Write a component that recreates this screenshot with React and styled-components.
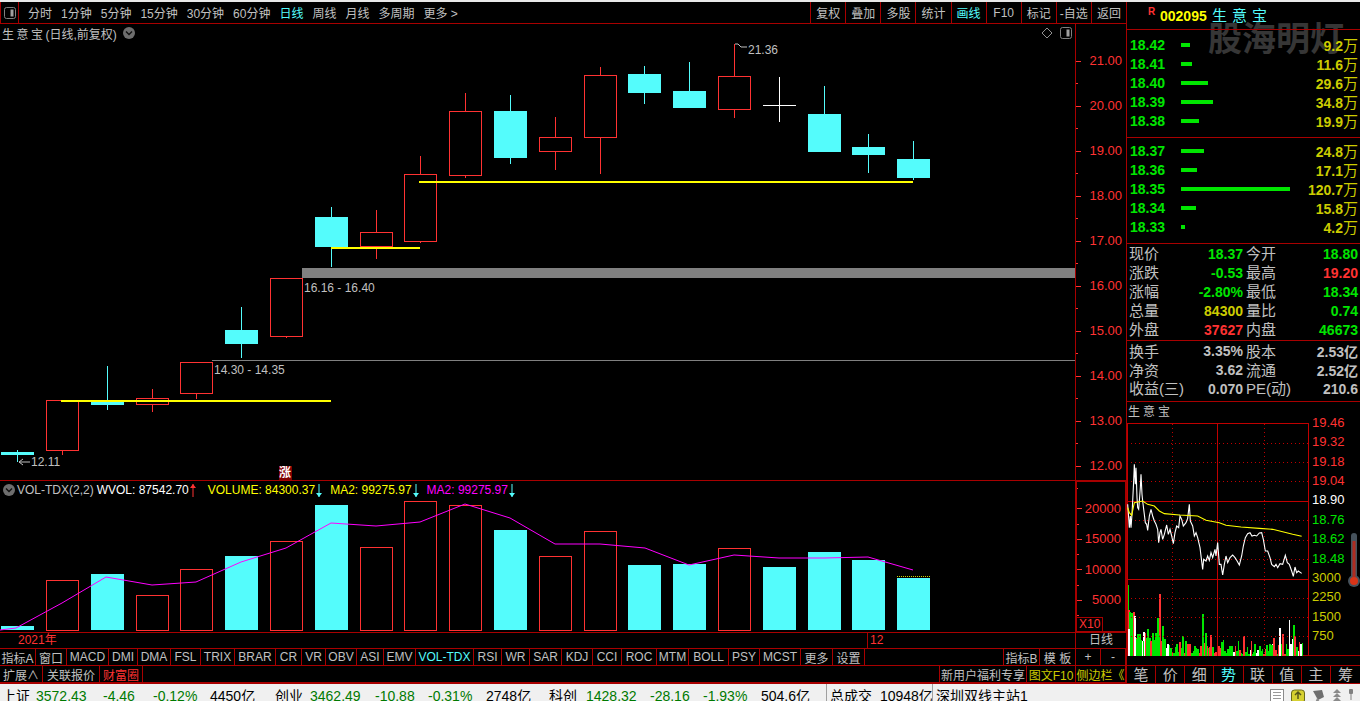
import React from 'react';
import styled, { createGlobalStyle } from 'styled-components';

const RED = '#ff3232';
const LINE = '#a80000';
const CYAN = '#54fcfc';
const GREEN = '#00e600';
const GREY = '#c0c0c0';
const YELLOW = '#cccc00';

const TOOL_LEFT = ['分时', '1分钟', '5分钟', '15分钟', '30分钟', '60分钟', '日线', '周线', '月线', '多周期', '更多 >'];
const TOOL_RIGHT = ['复权', '叠加', '多股', '统计', '画线', 'F10', '标记', '-自选', '返回'];

// [center, high, bodyTop, bodyBottom, low, up]
const CANDLES = [
  [17, 450, 452, 455, 462, false],
  [62, 400, 400, 450, 455, true],
  [107, 366, 401, 405, 410, false],
  [152, 389, 398, 404, 412, true],
  [196, 362, 362, 393, 399, true],
  [241, 307, 330, 344, 358, false],
  [286, 278, 278, 336, 338, true],
  [331, 207, 217, 247, 267, false],
  [376, 210, 232, 246, 259, true],
  [420, 156, 174, 241, 243, true],
  [465, 93, 111, 175, 178, true],
  [510, 95, 111, 158, 164, false],
  [555, 117, 137, 151, 170, true],
  [600, 67, 75, 137, 174, true],
  [644, 66, 74, 93, 104, false],
  [689, 62, 91, 108, 108, false],
  [734, 44, 76, 109, 118, true],
  [824, 86, 114, 152, 152, false],
  [868, 134, 147, 155, 173, false],
  [913, 141, 159, 178, 180, false],
];

// [left, top, up]
const VOLUMES = [
  [1, 626, false], [46, 580, true], [91, 574, false], [136, 595, true], [180, 569, true],
  [225, 556, false], [270, 541, true], [315, 505, false], [360, 547, true], [404, 501, true],
  [449, 505, true], [494, 530, false], [539, 556, true], [584, 531, true], [628, 565, false],
  [673, 564, false], [718, 548, true], [763, 567, false], [808, 552, false], [852, 560, false],
  [897, 578, false],
];

const VOL_MA = '0,630 16,628 62,603 106,577 152,585 196,582 241,562 286,548 331,523 376,526 420,522 465,504 510,518 555,544 600,544 645,548 689,565 734,555 779,558 824,558 868,557 913,570';

const SELLS = [['18.42', 9, '9.2'], ['18.41', 11, '11.6'], ['18.40', 27, '29.6'], ['18.39', 32, '34.8'], ['18.38', 18, '19.9']];
const BUYS = [['18.37', 23, '24.8'], ['18.36', 16, '17.1'], ['18.35', 109, '120.7'], ['18.34', 15, '15.8'], ['18.33', 4, '4.2']];

const QUOTES = [
  ['现价', '18.37', GREEN, '今开', '18.80', GREEN],
  ['涨跌', '-0.53', GREEN, '最高', '19.20', RED],
  ['涨幅', '-2.80%', GREEN, '最低', '18.34', GREEN],
  ['总量', '84300', YELLOW, '量比', '0.74', GREEN],
  ['外盘', '37627', RED, '内盘', '46673', GREEN],
];
const FINANCE = [
  ['换手', '3.35%', GREY, '股本', '2.53亿', GREY],
  ['净资', '3.62', GREY, '流通', '2.52亿', GREY],
  ['收益(三)', '0.070', GREY, 'PE(动)', '210.6', GREY],
];

const MINI_AXIS = [
  ['19.46', RED], ['19.32', RED], ['19.18', RED], ['19.04', RED], ['18.90', '#ffffff'], ['18.76', GREEN],
  ['18.62', GREEN], ['18.48', GREEN], ['3000', YELLOW], ['2250', YELLOW], ['1500', YELLOW], ['750', YELLOW],
];

const TABS_LEFT = [
  ['指标A', 36], ['窗口', 31], ['MACD', 42], ['DMI', 29], ['DMA', 33], ['FSL', 30], ['TRIX', 34], ['BRAR', 41],
  ['CR', 26], ['VR', 24], ['OBV', 31], ['ASI', 27], ['EMV', 32], ['VOL-TDX', 58], ['RSI', 28], ['WR', 28], ['SAR', 32],
  ['KDJ', 31], ['CCI', 29], ['ROC', 35], ['MTM', 32], ['BOLL', 40], ['PSY', 31], ['MCST', 41], ['更多', 32], ['设置', 32],
];
const TABS_RIGHT = [['指标B', 36], ['模 板', 36], ['+', 25], ['-', 25]];

const STATUS = [
  ['上证', '#000', 34], ['3572.43', '#007a00', 67], ['-4.46', '#007a00', 50], ['-0.12%', '#007a00', 57], ['4450亿', '#000', 65],
  ['创业', '#000', 35], ['3462.49', '#007a00', 65], ['-10.88', '#007a00', 53], ['-0.31%', '#007a00', 58], ['2748亿', '#000', 63],
  ['科创', '#000', 37], ['1428.32', '#007a00', 64], ['-28.16', '#007a00', 53], ['-1.93%', '#007a00', 58], ['504.6亿', '#000', 65],
];

const MINI_PRICE = [
  [5, 310], [8, 350], [10, 380], [13, 345], [15, 380], [18, 340], [20, 300], [23, 240], [25, 190], [28, 250], [30, 200], [33, 290], [35, 320],
  [38, 325], [40, 300], [43, 260], [45, 220], [48, 280], [50, 300], [55, 340], [58, 365], [62, 370], [65, 388], [70, 345], [75, 325], [80, 345],
  [85, 360], [90, 370], [95, 385], [98, 425], [102, 395], [105, 385], [110, 415], [115, 400], [122, 372], [127, 400], [132, 385], [137, 405], [142, 428],
  [147, 395], [152, 375], [158, 380], [162, 345], [167, 355], [172, 375], [180, 365], [185, 352], [190, 310], [193, 360], [200, 375], [205, 405], [210, 395],
  [215, 410], [222, 440], [230, 505], [233, 475], [240, 480], [245, 465], [250, 478], [255, 455], [260, 470], [267, 445], [270, 465], [275, 425],
  [280, 490], [285, 490], [290, 522], [295, 490], [300, 465], [305, 485], [312, 470], [320, 462], [327, 470], [332, 478], [340, 492], [347, 465],
  [352, 435], [358, 410], [365, 398], [372, 395], [378, 405], [385, 403], [392, 405], [400, 396], [407, 395], [412, 415], [418, 450], [425, 450],
  [432, 470], [437, 490], [445, 497], [450, 490], [455, 500], [462, 488], [470, 490], [478, 463], [484, 485], [490, 490], [497, 510], [502, 526],
  [507, 498], [512, 515], [517, 510], [527, 517],
].map(([x, y]) => `${1126 + x / 3},${400 + y / 3}`).join(' ');

const MINI_AVG = [
  [5, 320], [10, 335], [17, 343], [25, 305], [50, 300], [65, 310], [85, 315], [100, 330], [115, 338], [160, 342], [215, 345], [240, 358],
  [280, 365], [300, 373], [345, 378], [400, 382], [440, 385], [500, 400], [527, 406],
].map(([x, y]) => `${1126 + x / 3},${400 + y / 3}`).join(' ');

const TALL_BARS = [
  [4, 18, 'g'], [7, 93, 'r'], [10, 98, 'g'], [7, 150, 'w'], [16, 102, 'g'], [22, 99, 'r'], [25, 110, 'w'], [30, 180, 'g'], [40, 165, 'g'],
  [50, 185, 'g'], [64, 150, 'g'], [60, 178, 'g'], [73, 187, 'r'], [88, 177, 'g'], [94, 117, 'g'], [100, 45, 'r'], [96, 168, 'g'], [109, 140, 'g'],
  [160, 190, 'r'], [169, 170, 'g'], [178, 185, 'g'], [183, 195, 'r'], [190, 195, 'r'], [204, 200, 'g'], [229, 105, 'g'], [233, 192, 'r'],
  [238, 162, 'g'], [253, 167, 'r'], [285, 190, 'g'], [290, 183, 'g'], [313, 200, 'g'], [335, 185, 'g'], [352, 172, 'r'], [374, 185, 'r'],
  [400, 200, 'g'], [430, 195, 'g'], [436, 198, 'g'], [442, 177, 'r'], [458, 165, 'r'], [460, 147, 'w'], [469, 165, 'r'], [488, 123, 'w'],
  [492, 195, 'w'], [497, 180, 'w'], [502, 138, 'g'], [505, 172, 'r'], [518, 188, 'r'], [522, 195, 'w'], [527, 192, 'g'],
];
const BAR_COLORS = { g: '#00e600', r: RED, w: '#ffffff' };

// small filler bars under the tall ones, fixed pattern so every render is the same
const miniBars = () => {
  const bars = [];
  let seed = 7;
  for (let x = 1128; x < 1302; x += 1.5) {
    seed = (seed * 137 + 59) % 1009;
    const early = x < 1165 ? 12 : 0;
    const h = 2 + (seed % 11) + early;
    const kind = seed % 7 === 0 ? 'w' : seed % 3 === 0 ? 'r' : 'g';
    bars.push([x, h, kind]);
  }
  return bars;
};

const GlobalStyle = createGlobalStyle`
  html, body {
    margin: 0;
    padding: 0;
    background: #000;
    overflow: hidden;
  }
  * {
    box-sizing: border-box;
  }
  body {
    font-family: "Liberation Sans", "Noto Sans CJK SC", sans-serif;
  }
`;

const Page = styled.div`
  width: 1360px;
  height: 701px;
  overflow: hidden;
  display: flex;
  flex-direction: column;
  background: #000;
  color: ${GREY};
`;

const TopStrip = styled.div`
  height: 2px;
  background: #e8e8e8;
  flex: none;
`;

const Main = styled.div`
  height: 682px;
  display: flex;
  flex: none;
  border-bottom: 1px solid ${LINE};
`;

const LeftColumn = styled.div`
  width: 1126px;
  display: flex;
  flex-direction: column;
  flex: none;
`;

const Toolbar = styled.div`
  height: 22px;
  display: flex;
  align-items: stretch;
  border-bottom: 1px solid ${LINE};
  flex: none;
  font-size: 12px;
`;

const ToolIconCell = styled.div`
  width: 19px;
  display: flex;
  align-items: center;
  justify-content: center;
  border-left: 1px solid ${LINE};
  border-right: 1px solid ${LINE};
`;

const ToolLeft = styled.div`
  display: flex;
  align-items: center;
  gap: 9px;
  padding-left: 9px;
  flex: 1;
`;

const ToolItem = styled.span`
  color: ${(p) => (p.$active ? CYAN : GREY)};
  white-space: nowrap;
`;

const ToolButton = styled.div`
  width: ${(p) => p.$w}px;
  border-left: 1px solid ${LINE};
  display: flex;
  align-items: center;
  justify-content: center;
  white-space: nowrap;
  color: ${(p) => (p.$active ? CYAN : GREY)};
`;

const PricePanel = styled.div`
  height: 457px;
  display: flex;
  flex: none;
  border-bottom: 1px solid ${LINE};
`;

const ChartColumn = styled.div`
  width: 1075px;
  display: flex;
  flex-direction: column;
  flex: none;
`;

const PanelTitle = styled.div`
  height: 18px;
  display: flex;
  align-items: center;
  padding-left: 2px;
  font-size: 12px;
  white-space: nowrap;
  flex: none;
`;

const SpacedName = styled.span`
  letter-spacing: 2.5px;
`;

const TitleBadge = styled.span`
  display: flex;
  margin-left: 5px;
`;

const TitleTools = styled.div`
  margin-left: auto;
  display: flex;
  align-items: center;
  gap: 7px;
  padding-right: 3px;
`;

const ChartSvg = styled.svg`
  display: block;
  flex: none;
`;

const PriceAxis = styled.div`
  width: 51px;
  padding-top: 14px;
  border-left: 1px solid ${LINE};
  display: flex;
  flex-direction: column;
`;

const PriceTick = styled.div`
  position: relative;
  height: 45px;
  display: flex;
  align-items: center;
  justify-content: flex-end;
  padding-right: 4px;
  color: ${RED};
  font-size: 13px;
  flex: none;

  &::before {
    content: '';
    position: absolute;
    left: 0;
    top: 50%;
    width: 5px;
    height: 1px;
    background: ${RED};
  }

  &::after {
    content: '';
    position: absolute;
    left: 0;
    top: 100%;
    width: 2px;
    height: 1px;
    background: ${RED};
  }
`;

const VolumePanel = styled.div`
  height: 152px;
  display: flex;
  flex: none;
  border-bottom: 1px solid ${LINE};
`;

const Legend = styled.span`
  color: ${(p) => p.$color};
  margin-left: ${(p) => p.$gap || 0}px;
  font-size: 12px;
`;

const VolumeAxis = styled.div`
  position: relative;
  width: 51px;
  padding-top: 11px;
  border: 1px solid ${LINE};
  border-left-width: 2px;
  border-bottom-width: 1px;
  display: flex;
  flex-direction: column;
`;

const VolumeTick = styled(PriceTick)`
  height: 30.5px;
  font-size: 13px;
`;

const ScaleBadge = styled.div`
  position: absolute;
  left: 0;
  bottom: 0;
  width: 26px;
  height: 14px;
  border: 1px solid ${LINE};
  border-left: 0;
  border-bottom: 0;
  color: ${RED};
  font-size: 12px;
  line-height: 13px;
  padding-left: 2px;
`;

const DateRow = styled.div`
  height: 16px;
  display: flex;
  align-items: stretch;
  flex: none;
  border-bottom: 1px solid ${LINE};
  font-size: 12px;
  color: ${RED};
`;

const DateCell = styled.div`
  width: ${(p) => p.$w}px;
  padding-left: ${(p) => p.$pad}px;
  line-height: 15px;
  flex: none;
  border-left: ${(p) => (p.$mark ? `1px solid ${LINE}` : '0')};
  white-space: nowrap;
`;

const PeriodCell = styled.div`
  flex: 1;
  border-left: 1px solid ${LINE};
  color: ${GREY};
  text-align: center;
  line-height: 15px;
`;

const TabRow = styled.div`
  height: 17px;
  display: flex;
  align-items: stretch;
  flex: none;
  border-bottom: 1px solid ${LINE};
  font-size: 12px;
`;

const Tab = styled.div`
  width: ${(p) => p.$w}px;
  flex: none;
  display: flex;
  align-items: center;
  justify-content: center;
  white-space: nowrap;
  border-right: 1px solid ${LINE};
  color: ${(p) => p.$color || GREY};
`;

const TabSpacer = styled.div`
  flex: 1;
  border-right: 1px solid ${LINE};
`;

const SidePanel = styled.div`
  position: relative;
  width: 234px;
  flex: none;
  border-left: 1px solid ${LINE};
  display: flex;
  flex-direction: column;
`;

const Watermark = styled.div`
  position: absolute;
  left: 81px;
  top: 17px;
  font-size: 34px;
  line-height: 40px;
  font-weight: 700;
  color: #363636;
  white-space: nowrap;
`;

const StockHeader = styled.div`
  position: relative;
  height: 28px;
  border-bottom: 1px solid ${LINE};
  padding-left: 21px;
  display: flex;
  align-items: flex-start;
  flex: none;
`;

const HeaderFlag = styled.span`
  color: ${RED};
  font-size: 10px;
  font-weight: 700;
  margin-top: 4px;
  width: 12px;
`;

const HeaderCode = styled.span`
  color: #ffff00;
  font-size: 14px;
  font-weight: 700;
  margin-top: 6px;
  width: 52px;
`;

const HeaderName = styled.span`
  color: ${CYAN};
  font-size: 15px;
  letter-spacing: 5px;
  line-height: 17px;
  margin-top: 5px;
`;

const Section = styled.div`
  position: relative;
  height: ${(p) => p.$h}px;
  padding-top: ${(p) => p.$top}px;
  border-bottom: 1px solid ${LINE};
  flex: none;
`;

const BookRow = styled.div`
  height: 19px;
  display: flex;
  align-items: center;
  padding: 0 2px 0 3px;
`;

const BookPrice = styled.span`
  width: 51px;
  color: ${GREEN};
  font-size: 14px;
  font-weight: 700;
  flex: none;
`;

const BookBar = styled.span`
  display: block;
  height: 4px;
  background: ${GREEN};
  width: ${(p) => p.$w}px;
`;

const BookAmount = styled.span`
  margin-left: auto;
  color: ${YELLOW};
  font-size: 14px;
  font-weight: 700;
  white-space: nowrap;
`;

const Wan = styled.span`
  font-size: 15px;
  font-weight: 400;
`;

const QuoteRow = styled.div`
  height: 19px;
  display: grid;
  grid-template-columns: 114px 1fr;
  column-gap: 3px;
  padding: 0 2px;
  align-items: center;
`;

const QuoteCell = styled.div`
  display: flex;
  justify-content: space-between;
  align-items: center;
  white-space: nowrap;
`;

const QuoteLabel = styled.span`
  color: ${GREY};
  font-size: 15px;
  line-height: 19px;
`;

const QuoteValue = styled.span`
  color: ${(p) => p.$color};
  font-size: 14px;
  font-weight: 700;
`;

const MiniTitle = styled.div`
  height: 21px;
  padding-left: 1px;
  font-size: 12px;
  line-height: 20px;
  letter-spacing: 3px;
  flex: none;
`;

const MiniChart = styled.div`
  position: relative;
  height: 233px;
  display: flex;
  flex: none;
  border-bottom: 1px solid ${LINE};
`;

const MiniAxis = styled.div`
  margin-top: -10px;
  display: flex;
  flex-direction: column;
  padding-left: 2px;
`;

const MiniLabel = styled.div`
  height: 19.36px;
  line-height: 19.36px;
  font-size: 13px;
  color: ${(p) => p.$color};
`;

const ThermoSvg = styled.svg`
  position: absolute;
  right: 0;
  top: 110px;
`;

const GapBand = styled.div`
  height: 10px;
  border-bottom: 1px solid ${LINE};
  flex: none;
`;

const SideTabs = styled.div`
  flex: 1;
  min-height: 0;
  display: grid;
  grid-template-columns: repeat(8, 1fr);
`;

const SideTab = styled.div`
  display: flex;
  align-items: center;
  justify-content: center;
  font-size: 15px;
  line-height: 15px;
  min-height: 0;
  color: ${(p) => (p.$active ? CYAN : GREY)};
  border-right: 1px solid ${LINE};

  &:last-child {
    border-right: 0;
  }
`;

const StatusBar = styled.div`
  height: 17px;
  flex: none;
  display: flex;
  align-items: flex-start;
  background: #f0f0f0;
  font-size: 14px;
  line-height: 18px;
  padding: 3px 0 0 2px;
  overflow: hidden;
  white-space: nowrap;
`;

const StatusItem = styled.span`
  width: ${(p) => p.$w}px;
  color: ${(p) => p.$color};
  flex: none;
`;

const StatusBox = styled.span`
  width: ${(p) => p.$w}px;
  flex: none;
  color: #000;
  border-left: 1px solid #a0a0a0;
  padding-left: 3px;
  margin-top: -3px;
  padding-top: 3px;
  height: 17px;
  word-spacing: 4px;
`;

const TrayIcons = styled.div`
  margin-left: auto;
  display: flex;
  align-items: flex-start;
  gap: 7px;
  padding-right: 7px;
  margin-top: 2px;
`;

const Chevron = () => (
  <svg width="14" height="14" viewBox="0 0 14 14">
    <circle cx="7" cy="7" r="6" fill="#6e6e6e" />
    <path d="M4 5.5 L7 8.5 L10 5.5" fill="none" stroke="#111" strokeWidth="1.4" />
  </svg>
);

const PanelIcon = () => (
  <svg width="12" height="12" viewBox="0 0 12 12">
    <rect x="0.5" y="0.5" width="11" height="11" rx="2" fill="none" stroke="#808080" />
    <rect x="6.5" y="2.5" width="3" height="7" fill="#a0a0a0" />
  </svg>
);

const Diamond = () => (
  <svg width="12" height="12" viewBox="0 0 12 12">
    <path d="M6 1 L11 6 L6 11 L1 6 Z" fill="none" stroke="#909090" />
  </svg>
);

const Arrow = ({ color, up }) => (
  <svg width="8" height="13" viewBox="0 0 8 13">
    <path d="M4 0 V13" stroke={color} strokeWidth="1" />
    {up ? <path d="M1 4 L4 0 L7 4 Z" fill={color} /> : <path d="M1 9 L4 13 L7 9 Z" fill={color} />}
  </svg>
);

const Candle = ({ c }) => {
  const [x, high, top, bottom, low, up] = c;
  const color = up ? RED : CYAN;
  return (
    <g shapeRendering="crispEdges">
      <line x1={x + 0.5} x2={x + 0.5} y1={high} y2={low} stroke={color} />
      {up ? (
        <rect x={x - 15.5} y={top + 0.5} width={32} height={bottom - top} fill="#000" stroke={color} />
      ) : (
        <rect x={x - 16} y={top} width={33} height={bottom - top} fill={color} />
      )}
    </g>
  );
};

const PriceChart = () => (
  <ChartSvg width="1075" height="438" viewBox="0 42 1075 438">
    <rect x="302" y="268" width="773" height="10" fill="#808080" />
    <line x1="212" x2="1075" y1="360.5" y2="360.5" stroke="#808080" shapeRendering="crispEdges" />
    {CANDLES.map((c) => <Candle key={c[0]} c={c} />)}
    <g shapeRendering="crispEdges">
      <line x1="779.5" x2="779.5" y1="77" y2="122" stroke="#fff" />
      <line x1="763" x2="796" y1="105.5" y2="105.5" stroke="#fff" />
    </g>
    <g stroke="#ffff00" strokeWidth="2" shapeRendering="crispEdges">
      <line x1="61" x2="331" y1="401" y2="401" />
      <line x1="331" x2="420" y1="248" y2="248" />
      <line x1="419" x2="913" y1="182" y2="182" />
    </g>
    <g fill={GREY} fontSize="12">
      <text x="748" y="54">21.36</text>
      <text x="304" y="292">16.16 - 16.40</text>
      <text x="214" y="374">14.30 - 14.35</text>
      <text x="31" y="466">12.11</text>
    </g>
    <path d="M735 44 h3 l3 3 h6" fill="none" stroke={GREY} />
    <path d="M30 462 h-11 m4 -3 l-4 3 l4 3" fill="none" stroke={GREY} />
    <rect x="279" y="466" width="13" height="14" fill="#800000" />
    <text x="279" y="477" fontSize="12" fill="#fff" fontWeight="700">涨</text>
  </ChartSvg>
);

const VolumeChart = () => (
  <ChartSvg width="1075" height="133" viewBox="0 499 1075 133">
    {VOLUMES.map(([x, top, up]) => (up ? (
      <rect key={x} x={x + 0.5} y={top + 0.5} width={32} height={629.5 - top} fill="#000" stroke={RED} shapeRendering="crispEdges" />
    ) : (
      <rect key={x} x={x} y={top} width={33} height={630 - top} fill={CYAN} />
    )))}
    <line x1="897" x2="931" y1="576.5" y2="576.5" stroke={YELLOW} strokeDasharray="1 1" />
    <polyline points={VOL_MA} fill="none" stroke="#ff00ff" strokeWidth="1" />
  </ChartSvg>
);

const MiniPlot = () => (
  <ChartSvg width="183" height="233" viewBox="1127 422 183 233">
    <g shapeRendering="crispEdges">
      {miniBars().map(([x, h, k], i) => (
        <rect key={i} x={x} y={655 - h} width="1.5" height={h} fill={BAR_COLORS[k]} />
      ))}
      {TALL_BARS.map(([x, top, k], i) => (
        <rect key={i} x={1126 + x / 3} y={578 + top / 3} width="1.5" height={655 - (578 + top / 3)} fill={BAR_COLORS[k]} />
      ))}
      <g stroke="#c00000" strokeDasharray="1 3" fill="none">
        {[442, 461, 480, 519, 539, 558, 597, 616, 635].map((y) => (
          <line key={y} x1="1127" x2="1309" y1={y + 0.5} y2={y + 0.5} />
        ))}
        {[1172.5, 1264.5].map((x) => <line key={x} x1={x} x2={x} y1="423" y2="655" />)}
      </g>
      <g stroke="#c00000" fill="none">
        <rect x="1127.5" y="422.5" width="181" height="233" />
        <line x1="1127" x2="1309" y1="500.5" y2="500.5" />
        <line x1="1127" x2="1309" y1="578.5" y2="578.5" />
        <line x1="1217.5" x2="1217.5" y1="423" y2="655" />
      </g>
    </g>
    <polyline points={MINI_PRICE} fill="none" stroke="#fff" strokeWidth="1.1" />
    <polyline points={MINI_AVG} fill="none" stroke="#ffff00" strokeWidth="1.1" />
  </ChartSvg>
);

const Thermometer = () => (
  <ThermoSvg width="12" height="54" viewBox="0 0 12 54">
    <rect x="3" y="0" width="6" height="46" rx="3" fill="#46525c" />
    <circle cx="6" cy="48" r="6" fill="#46525c" />
    <rect x="4.5" y="8" width="3" height="38" fill="#b02c20" />
    <circle cx="6" cy="48" r="4" fill="#d83418" />
  </ThermoSvg>
);

const TrayList = () => (
  <svg width="14" height="14" viewBox="0 0 14 14">
    <rect x="0.5" y="0.5" width="13" height="14" fill="#fff" stroke="#8a8a8a" />
    <path d="M3 3.5 H11 M3 6.5 H11 M3 9.5 H11 M3 12.5 H11" stroke="#9a9a9a" />
  </svg>
);
const TrayCoin = () => (
  <svg width="14" height="14" viewBox="0 0 14 14">
    <rect x="0.5" y="1" width="13" height="13" rx="3" fill="#d6d030" stroke="#6a6a18" />
    <path d="M7 3 V10 M4 6 L7 3 L10 6" fill="none" stroke="#55551a" strokeWidth="1.5" />
  </svg>
);
const TrayDish = () => (
  <svg width="13" height="14" viewBox="0 0 13 14">
    <path d="M1 2 L10 1 L12 8 L6 11 Z" fill="#6e6e6e" />
    <path d="M5 9 L3 14 H9 Z" fill="#8a8a8a" />
  </svg>
);
const TrayTree = () => (
  <svg width="10" height="14" viewBox="0 0 10 14">
    <path d="M5 0 L9 4 H1 Z M5 4 L9 8 H1 Z M5 8 L9 12 H1 Z" fill="#8a8a8a" />
  </svg>
);
const TrayPin = () => (
  <svg width="4" height="14" viewBox="0 0 4 14">
    <rect x="0" y="0" width="4" height="5" rx="1" fill="#808080" />
    <rect x="1.5" y="5" width="1" height="6" fill="#808080" />
  </svg>
);

const BookSection = ({ rows, h, top }) => (
  <Section $h={h} $top={top}>
    {rows.map(([price, bar, amount]) => (
      <BookRow key={price}>
        <BookPrice>{price}</BookPrice>
        <BookBar $w={bar} />
        <BookAmount>{amount}<Wan>万</Wan></BookAmount>
      </BookRow>
    ))}
  </Section>
);

const QuoteSection = ({ rows, h, top }) => (
  <Section $h={h} $top={top}>
    {rows.map(([l1, v1, c1, l2, v2, c2]) => (
      <QuoteRow key={l1}>
        <QuoteCell><QuoteLabel>{l1}</QuoteLabel><QuoteValue $color={c1}>{v1}</QuoteValue></QuoteCell>
        <QuoteCell><QuoteLabel>{l2}</QuoteLabel><QuoteValue $color={c2}>{v2}</QuoteValue></QuoteCell>
      </QuoteRow>
    ))}
  </Section>
);

export default function App() {
  return (
    <Page>
      <GlobalStyle />
      <TopStrip />
      <Main>
        <LeftColumn>
          <Toolbar>
            <ToolIconCell><PanelIcon /></ToolIconCell>
            <ToolLeft>
              {TOOL_LEFT.map((t) => <ToolItem key={t} $active={t === '日线'}>{t}</ToolItem>)}
            </ToolLeft>
            {TOOL_RIGHT.map((t) => <ToolButton key={t} $w={35.1} $active={t === '画线'}>{t}</ToolButton>)}
          </Toolbar>

          <PricePanel>
            <ChartColumn>
              <PanelTitle>
                <SpacedName>生意宝</SpacedName>(日线,前复权)
                <TitleBadge><Chevron /></TitleBadge>
                <TitleTools><Diamond /><PanelIcon /></TitleTools>
              </PanelTitle>
              <PriceChart />
            </ChartColumn>
            <PriceAxis>
              {['21.00', '20.00', '19.00', '18.00', '17.00', '16.00', '15.00', '14.00', '13.00', '12.00'].map((v) => (
                <PriceTick key={v}>{v}</PriceTick>
              ))}
            </PriceAxis>
          </PricePanel>

          <VolumePanel>
            <ChartColumn>
              <PanelTitle>
                <Chevron />
                <Legend $color={GREY} $gap={1}>VOL-TDX(2,2)</Legend>
                <Legend $color="#ffffff" $gap={3}>WVOL: 87542.70</Legend>
                <Arrow color={RED} up />
                <Legend $color="#ffff00" $gap={11}>VOLUME: 84300.37</Legend>
                <Arrow color={CYAN} />
                <Legend $color="#ffff00" $gap={7}>MA2: 99275.97</Legend>
                <Arrow color={CYAN} />
                <Legend $color="#ff00ff" $gap={7}>MA2: 99275.97</Legend>
                <Arrow color={CYAN} />
              </PanelTitle>
              <VolumeChart />
            </ChartColumn>
            <VolumeAxis>
              {['20000', '15000', '10000', '5000'].map((v) => <VolumeTick key={v}>{v}</VolumeTick>)}
              <ScaleBadge>X10</ScaleBadge>
            </VolumeAxis>
          </VolumePanel>

          <DateRow>
            <DateCell $w={867} $pad={18}>2021年</DateCell>
            <DateCell $w={208} $pad={2} $mark>12</DateCell>
            <PeriodCell>日线</PeriodCell>
          </DateRow>

          <TabRow>
            {TABS_LEFT.map(([t, w]) => <Tab key={t} $w={w} $color={t === 'VOL-TDX' ? CYAN : undefined}>{t}</Tab>)}
            <TabSpacer />
            {TABS_RIGHT.map(([t, w]) => <Tab key={t} $w={w}>{t}</Tab>)}
          </TabRow>

          <TabRow>
            <Tab $w={43}>扩展∧</Tab>
            <Tab $w={57}>关联报价</Tab>
            <Tab $w={43} $color={RED}>财富圈</Tab>
            <TabSpacer />
            <Tab $w={87}>新用户福利专享</Tab>
            <Tab $w={49} $color={YELLOW}>图文F10</Tab>
            <Tab $w={50} $color={YELLOW}>侧边栏《</Tab>
          </TabRow>
        </LeftColumn>

        <SidePanel>
          <Watermark>股海明灯</Watermark>
          <StockHeader>
            <HeaderFlag>R</HeaderFlag>
            <HeaderCode>002095</HeaderCode>
            <HeaderName>生意宝</HeaderName>
          </StockHeader>
          <BookSection rows={SELLS} h={108} top={5} />
          <BookSection rows={BUYS} h={106} top={3} />
          <QuoteSection rows={QUOTES} h={97} top={0} />
          <QuoteSection rows={FINANCE} h={61} top={0} />
          <MiniTitle>生意宝</MiniTitle>
          <MiniChart>
            <MiniPlot />
            <MiniAxis>
              {MINI_AXIS.map(([v, c]) => <MiniLabel key={v} $color={c}>{v}</MiniLabel>)}
            </MiniAxis>
            <Thermometer />
          </MiniChart>
          <GapBand />
          <SideTabs>
            {['笔', '价', '细', '势', '联', '值', '主', '筹'].map((t) => <SideTab key={t} $active={t === '势'}>{t}</SideTab>)}
          </SideTabs>
        </SidePanel>
      </Main>

      <StatusBar>
        {STATUS.map(([t, c, w], i) => <StatusItem key={i} $color={c} $w={w}>{t}</StatusItem>)}
        <StatusBox $w={106}>总成交 10948亿</StatusBox>
        <StatusBox $w={200}>深圳双线主站1</StatusBox>
        <TrayIcons>
          <TrayList /><TrayCoin /><TrayDish /><TrayTree /><TrayPin />
        </TrayIcons>
      </StatusBar>
    </Page>
  );
}
